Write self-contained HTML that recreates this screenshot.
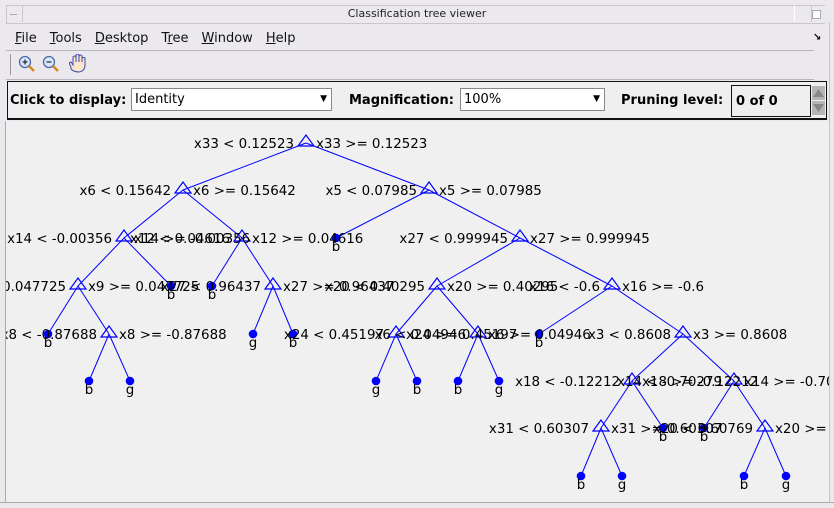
<!DOCTYPE html>
<html><head><meta charset="utf-8"><style>
html,body{margin:0;padding:0;width:834px;height:508px;overflow:hidden;background:#ebe9ed;font-family:"DejaVu Sans","Liberation Sans",sans-serif;}
.abs{position:absolute}
</style></head><body>
<div class="abs" style="left:6px;top:5px;width:818px;height:17px;border:1px solid #c8c6cc;border-right:none;background:#ebe9ed"></div>
<div class="abs" style="left:6px;top:5px;width:16px;height:17px;border-right:1px solid #c8c6cc"></div>
<div class="abs" style="left:10px;top:14px;width:7px;height:1px;background:#aaa"></div>
<div class="abs" style="left:0;top:1px;width:834px;text-align:center;font-size:11px;line-height:26px;color:#222">Classification tree viewer</div>
<div class="abs" style="left:794px;top:5px;width:16px;height:17px;border-left:1px solid #fff;border-right:1px solid #c8c6cc"></div>
<div class="abs" style="left:812px;top:10px;width:7px;height:7px;border:1px solid #aaa;background:#fff"></div>
<div class="abs" style="left:15px;top:31px;font-size:13px;color:#111">
<span style="margin-right:13px"><u>F</u>ile</span><span style="margin-right:13px"><u>T</u>ools</span><span style="margin-right:13px"><u>D</u>esktop</span><span style="margin-right:13px">T<u>r</u>ee</span><span style="margin-right:13px"><u>W</u>indow</span><span><u>H</u>elp</span></div>
<div class="abs" style="left:813px;top:32px;font-size:10px;font-weight:bold">↘</div>
<div class="abs" style="left:6px;top:50px;width:808px;height:1px;background:#b8b6bc"></div>
<div class="abs" style="left:10px;top:54px;width:1px;height:21px;background:#999"></div>
<svg class="abs" style="left:16px;top:54px" width="80" height="22">
<circle cx="9" cy="8" r="5.5" fill="#dbe8fb" stroke="#4a6aa8" stroke-width="1.3"/><path d="M6.5 8h5M9 5.5v5" stroke="#223" stroke-width="1.2"/><path d="M13 12l5 5" stroke="#d88a1a" stroke-width="2.6"/>
<circle cx="33" cy="8" r="5.5" fill="#dbe8fb" stroke="#4a6aa8" stroke-width="1.3"/><path d="M30.5 8h5" stroke="#223" stroke-width="1.2"/><path d="M37 12l5 5" stroke="#d88a1a" stroke-width="2.6"/>
<path d="M55 13 q-3-5 0-5 l2 3 v-8 q2-2 3 0 v5 v-7 q2-2 3 0 v7 v-6 q2-2 3 0 v6 v-4 q2-1 3 0 v7 q0 6-6 7 q-5 0-8-3z" fill="#fbe6cc" stroke="#3a4ab0" stroke-width="1"/>
</svg>
<div class="abs" style="left:6px;top:79px;width:808px;height:1px;background:#b8b6bc"></div>
<div class="abs" style="left:7px;top:81px;width:820px;height:39px;border:1px solid #111;border-bottom:2px solid #111;background:#efefef;box-sizing:border-box"></div>
<div class="abs" style="left:10px;top:93px;font-size:13px;font-weight:bold">Click to display:</div>
<div class="abs" style="left:131px;top:88px;width:201px;height:23px;border:1px solid #888;background:#fff;box-sizing:border-box;font-size:13px;padding:3px 3px">Identity<span style="position:absolute;right:4px;top:5px;font-size:9px">▼</span></div>
<div class="abs" style="left:349px;top:93px;font-size:13px;font-weight:bold">Magnification:</div>
<div class="abs" style="left:460px;top:88px;width:145px;height:23px;border:1px solid #888;background:#fff;box-sizing:border-box;font-size:13px;padding:3px 3px">100%<span style="position:absolute;right:4px;top:5px;font-size:9px">▼</span></div>
<div class="abs" style="left:621px;top:93px;font-size:13px;font-weight:bold">Pruning level:</div>
<div class="abs" style="left:731px;top:85px;width:80px;height:32px;border:1px solid #111;background:#efefef;box-sizing:border-box;font-size:13px;font-weight:bold;padding:8px 4px">0 of 0</div>
<div class="abs" style="left:812px;top:86px;width:13px;height:14px;background:#b5b5b5"></div>
<div class="abs" style="left:812px;top:101px;width:13px;height:14px;background:#b5b5b5"></div>
<svg class="abs" style="left:812px;top:86px" width="13" height="29"><path d="M1 11 L6.5 3 L12 11z" fill="#888"/><path d="M1 18 L6.5 26 L12 18z" fill="#888"/></svg>
<div class="abs" style="left:5px;top:121px;width:824px;height:381px;background:#f0f0f0;border-left:1px solid #aaa;border-bottom:1px solid #aaa"></div>
<svg class="abs" style="left:6px;top:121px" width="823" height="380" viewBox="6 121 823 380" font-family="DejaVu Sans, sans-serif" font-size="13.4">
<g stroke="#0000ff" stroke-width="1" fill="none">
<path d="M306 143L183 190M306 143L429 190M183 190L124 238M183 190L242 238M429 190L336 238M429 190L520 238M124 238L78 286M124 238L171 286M242 238L212 286M242 238L273 286M520 238L437 286M520 238L612 286M78 286L48 334M78 286L109 334M273 286L253 334M273 286L293 334M437 286L396 334M437 286L478 334M612 286L539 334M612 286L683 334M109 334L89 381M109 334L130 381M396 334L376 381M396 334L417 381M478 334L458 381M478 334L499 381M683 334L632 381M683 334L734 381M632 381L601 428M632 381L663 428M734 381L704 428M734 381L765 428M601 428L581 476M601 428L622 476M765 428L744 476M765 428L786 476"/>
</g>
<g stroke="#0000ff" stroke-width="1.2" fill="none">
<path d="M306 135l-8 11h16z"/><path d="M183 182l-8 11h16z"/><path d="M429 182l-8 11h16z"/><path d="M124 230l-8 11h16z"/><path d="M242 230l-8 11h16z"/><path d="M520 230l-8 11h16z"/><path d="M78 278l-8 11h16z"/><path d="M273 278l-8 11h16z"/><path d="M437 278l-8 11h16z"/><path d="M612 278l-8 11h16z"/><path d="M109 326l-8 11h16z"/><path d="M396 326l-8 11h16z"/><path d="M478 326l-8 11h16z"/><path d="M683 326l-8 11h16z"/><path d="M632 373l-8 11h16z"/><path d="M734 373l-8 11h16z"/><path d="M601 420l-8 11h16z"/><path d="M765 420l-8 11h16z"/>
</g>
<g fill="#0000ff">
<circle cx="336" cy="238" r="4.3"/><circle cx="171" cy="286" r="4.3"/><circle cx="212" cy="286" r="4.3"/><circle cx="48" cy="334" r="4.3"/><circle cx="253" cy="334" r="4.3"/><circle cx="293" cy="334" r="4.3"/><circle cx="539" cy="334" r="4.3"/><circle cx="89" cy="381" r="4.3"/><circle cx="130" cy="381" r="4.3"/><circle cx="376" cy="381" r="4.3"/><circle cx="417" cy="381" r="4.3"/><circle cx="458" cy="381" r="4.3"/><circle cx="499" cy="381" r="4.3"/><circle cx="663" cy="428" r="4.3"/><circle cx="704" cy="428" r="4.3"/><circle cx="581" cy="476" r="4.3"/><circle cx="622" cy="476" r="4.3"/><circle cx="744" cy="476" r="4.3"/><circle cx="786" cy="476" r="4.3"/>
</g>
<g fill="#000" text-anchor="middle">
<text x="336" y="251">b</text><text x="171" y="299">b</text><text x="212" y="299">b</text><text x="48" y="347">b</text><text x="253" y="347">g</text><text x="293" y="347">b</text><text x="539" y="347">b</text><text x="89" y="394">b</text><text x="130" y="394">g</text><text x="376" y="394">g</text><text x="417" y="394">b</text><text x="458" y="394">b</text><text x="499" y="394">g</text><text x="663" y="441">b</text><text x="704" y="441">b</text><text x="581" y="489">b</text><text x="622" y="489">g</text><text x="744" y="489">b</text><text x="786" y="489">g</text>
</g>
<g fill="#000" text-anchor="end">
<text x="294" y="148">x33 &lt; 0.12523</text><text x="171" y="195">x6 &lt; 0.15642</text><text x="417" y="195">x5 &lt; 0.07985</text><text x="112" y="243">x14 &lt; -0.00356</text><text x="230" y="243">x12 &lt; 0.04616</text><text x="508" y="243">x27 &lt; 0.999945</text><text x="66" y="291">x9 &lt; 0.047725</text><text x="261" y="291">x27 &lt; 0.96437</text><text x="425" y="291">x20 &lt; 0.40295</text><text x="600" y="291">x16 &lt; -0.6</text><text x="97" y="339">x8 &lt; -0.87688</text><text x="384" y="339">x24 &lt; 0.45197</text><text x="466" y="339">x6 &lt; 0.04946</text><text x="671" y="339">x3 &lt; 0.8608</text><text x="620" y="386">x18 &lt; -0.12212</text><text x="722" y="386">x14 &lt; -0.70279</text><text x="589" y="433">x31 &lt; 0.60307</text><text x="753" y="433">x20 &lt; 0.60769</text>
</g>
<g fill="#000">
<text x="316" y="148">x33 &gt;= 0.12523</text><text x="193" y="195">x6 &gt;= 0.15642</text><text x="439" y="195">x5 &gt;= 0.07985</text><text x="134" y="243">x14 &gt;= -0.00356</text><text x="252" y="243">x12 &gt;= 0.04616</text><text x="530" y="243">x27 &gt;= 0.999945</text><text x="88" y="291">x9 &gt;= 0.047725</text><text x="283" y="291">x27 &gt;= 0.96437</text><text x="447" y="291">x20 &gt;= 0.40295</text><text x="622" y="291">x16 &gt;= -0.6</text><text x="119" y="339">x8 &gt;= -0.87688</text><text x="406" y="339">x24 &gt;= 0.45197</text><text x="488" y="339">x6 &gt;= 0.04946</text><text x="693" y="339">x3 &gt;= 0.8608</text><text x="642" y="386">x18 &gt;= -0.12212</text><text x="744" y="386">x14 &gt;= -0.70279</text><text x="611" y="433">x31 &gt;= 0.60307</text><text x="775" y="433">x20 &gt;= 0.60769</text>
</g>
</svg>
<div class="abs" style="left:829px;top:22px;width:1px;height:480px;background:#c8c6cc"></div>
<div class="abs" style="left:0;top:502px;width:834px;height:1px;background:#aaa"></div>
</body></html>
